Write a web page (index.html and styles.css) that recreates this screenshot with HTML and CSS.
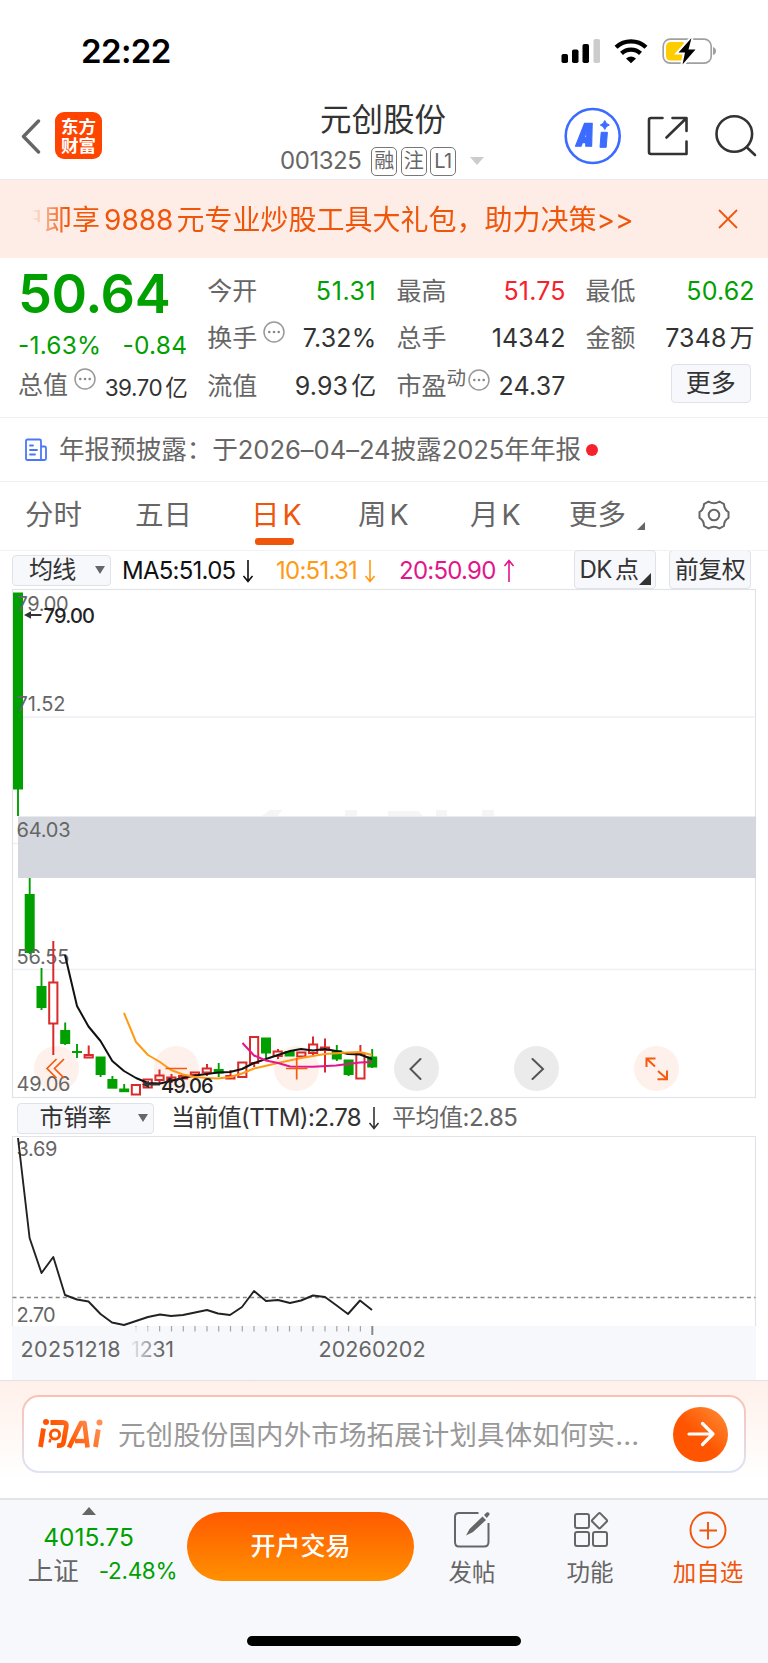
FILE: index.html
```html
<!DOCTYPE html>
<html lang="zh-CN">
<head>
<meta charset="utf-8">
<title>元创股份 001325</title>
<link rel="stylesheet" href="styles.css">
</head>
<body>
<div class="status">
  <span class="clock">22:22</span>
  <svg class="status-icons" width="160" height="32" viewBox="556 35 160 32">
    <g fill="#000"><rect x="561.5" y="54" width="6.5" height="9" rx="1.8"/><rect x="572" y="49.5" width="6.5" height="13.5" rx="1.8"/><rect x="582.5" y="44" width="6.5" height="19" rx="1.8"/></g>
    <rect x="593.500" y="39" width="6.500" height="24" rx="1.800" fill="#ccc"/>
    <g fill="none" stroke="#000" stroke-width="4.300"><path d="M616 47.300a22 22 0 0 1 30 0"/><path d="M621.500 53.300a14 14 0 0 1 19 0"/></g>
    <path d="M626 58.500q5-3.800 10 0l-5 4.800z" fill="#000"/>
    <rect x="663.200" y="39.200" width="48" height="24" rx="7" fill="none" stroke="#a0a0a0" stroke-width="1.700"/>
    <path d="M713 47q3 1 3 4t-3 4z" fill="#a0a0a0"/>
    <rect x="666" y="42" width="20" height="18.500" rx="4.500" fill="#ffcc00"/>
    <path d="M691.500 38L678.500 52.500h6.500L682.500 64.500 695.500 49.500h-7z" fill="#000" stroke="#fff" stroke-width="4" paint-order="stroke"/>
  </svg>
</div>

<header class="header">
  <svg class="back" width="22" height="36" viewBox="0 0 22 36"><path d="M18.500 3L3.500 18.500 18.500 34" fill="none" stroke="#666" stroke-width="3.400" stroke-linecap="round" stroke-linejoin="round"/></svg>
  <div class="logo"><span>东方</span><span>财富</span></div>
  <div class="title">
    <h1>元创股份</h1>
    <div class="code"><span class="num">001325</span><i>融</i><i>注</i><i>L1</i><b class="caret"></b></div>
  </div>
  <svg class="tools" width="204" height="60" viewBox="562 105 204 60">
    <circle cx="592.700" cy="136" r="27" fill="#fff" stroke="#3b6bff" stroke-width="2.600"/>
    <path fill-rule="evenodd" d="M575.500 146.200L584.600 123.300H592.200L591.600 146.200H585.800V142.600H582.400L581 146.200zM584 137.600H586.200V131.200z" fill="#3b6bff" stroke="#3b6bff" stroke-width="1.200" stroke-linejoin="round"/>
    <path d="M601.200 132.300h6.200l-1.200 15h-6.200zM604.800 120.500q1 3.500 4.500 4.500-3.500 1-4.500 4.500-1-3.500-4.500-4.500 3.500-1 4.500-4.500z" fill="#3b6bff" stroke="#3b6bff" stroke-width="1" stroke-linejoin="round"/>
    <g fill="none" stroke="#333" stroke-width="2.600" stroke-linecap="round" stroke-linejoin="round">
      <path d="M662.500 118H651q-2 0-2 2v32q0 2 2 2h35.500V141.500M672.500 118h14v13M686 118.500L666.500 137.500"/>
      <circle cx="734.300" cy="134" r="17.800"/><path d="M747 147.500l8 7.500"/>
    </g>
  </svg>
</header>

<div class="banner">
  <div class="marquee"><span>户</span>即享<em>9888</em>元专业炒股工具大礼包，助力决策&gt;&gt;</div>
  <svg width="22" height="22" viewBox="0 0 22 22"><path d="M2 2l18 18M20 2L2 20" stroke="#f0560b" stroke-width="1.800"/></svg>
</div>

<section class="quote">
  <div class="col main">
    <div class="price">50.64</div>
    <div class="pair green change"><span>-1.63%</span><span>-0.84</span></div>
    <div class="pair cap"><label>总值</label><svg class="dots" width="22" height="22" viewBox="0 0 22 22"><use href="#dots"/></svg><span class="end small">39.70<u>亿</u></span></div>
  </div>
  <div class="col">
    <div class="cell"><label>今开</label><span class="end green wide">51.31</span></div>
    <div class="cell"><label>换手</label><svg class="dots" width="22" height="22" viewBox="0 0 22 22"><use href="#dots"/></svg><span class="end">7.32%</span></div>
    <div class="cell"><label>流值</label><span class="end">9.93<u>亿</u></span></div>
  </div>
  <div class="col">
    <div class="cell"><label>最高</label><span class="end red">51.75</span></div>
    <div class="cell"><label>总手</label><span class="end">14342</span></div>
    <div class="cell"><label>市盈</label><sup>动</sup><svg class="dots near" width="22" height="22" viewBox="0 0 22 22"><g id="dots"><circle cx="11" cy="11" r="10" fill="none" stroke="#999" stroke-width="1.500"/><g fill="#888"><circle cx="6.300" cy="11" r="1.300"/><circle cx="11" cy="11" r="1.300"/><circle cx="15.700" cy="11" r="1.300"/></g></g></svg><span class="end">24.37</span></div>
  </div>
  <div class="col">
    <div class="cell"><label>最低</label><span class="end green">50.62</span></div>
    <div class="cell"><label>金额</label><span class="end">7348<u>万</u></span></div>
    <div class="cell"><span class="more">更多</span></div>
  </div>
</section>

<div class="news">
  <svg width="24" height="24" viewBox="0 0 24 24"><g fill="none" stroke="#4a78f5" stroke-width="1.800" stroke-linejoin="round" stroke-linecap="round"><path d="M2 3q0-1.500 1.500-1.500h12q1.500 0 1.500 1.500v19H3.500Q2 22 2 20.500zM17 8.500h3.500q1.500 0 1.500 1.500v10.500q0 1.500-1.500 1.500H17M6 7.500h3M6 12h7M6 16.500h5"/></g></svg>
  <p>年报预披露：于2026–04–24披露2025年年报</p><b></b>
</div>

<nav class="tabs">
  <span>分时</span><span>五日</span><span class="on">日<em>K</em></span><span>周<em>K</em></span><span>月<em>K</em></span><span>更多</span>
  <svg class="corner" width="8" height="8" viewBox="0 0 8 8"><path d="M8 0v8H0z" fill="#666"/></svg>
  <svg class="gear" width="34" height="32" viewBox="0 0 34 32"><g fill="none" stroke="#666" stroke-width="2"><circle cx="17" cy="16" r="5.300"/><path stroke-linejoin="round" d="M11.500 2.500Q17 6 22.500 2.500L27 5.200Q27 10.500 31.500 13.200V18.800Q27 21.500 27 26.800L22.500 29.500Q17 26 11.500 29.500L7 26.800Q7 21.500 2.500 18.800V13.200Q7 10.500 7 5.200z"/></g></svg>
</nav>

<div class="ma">
  <span class="select s1">均线<svg width="10" height="8" viewBox="0 0 10 8"><path d="M0 0h10L5 8z" fill="#666"/></svg></span>
  <span class="m5">MA5:51.05<svg class="arr" viewBox="0 0 12 24"><path d="M6 1v21M1.500 17L6 22.500 10.500 17"/></svg></span>
  <span class="m10">10:51.31<svg class="arr" viewBox="0 0 12 24"><path d="M6 1v21M1.500 17L6 22.500 10.500 17"/></svg></span>
  <span class="m20">20:50.90<svg class="arr" viewBox="0 0 12 24"><path d="M6 23V2M1.500 7L6 1.500 10.500 7"/></svg></span>
  <span class="tag dk">DK<u>点</u><svg width="12" height="12" viewBox="0 0 12 12"><path d="M12 0v12H0z" fill="#333"/></svg></span>
  <span class="tag fq">前复权</span>
</div>

<svg class="kline" width="768" height="511" viewBox="0 588 768 511">
  <g fill="none" stroke="#eef0f4" stroke-width="1.300"><path d="M12.500 717H755.500M12.500 843.500H755.500M12.500 969.500H755.500"/></g>
  <rect x="12.500" y="589.500" width="743" height="508" fill="none" stroke="#e1e3e8" stroke-width="1.200"/>
  <g fill="#f5f5f6"><path d="M270 810h12l-4 6h-16zM345 810h12v6h-12zM388 816v-5h30l5 5zM436 810h11v6h-11zM482 810h12v6h-12z"/></g>
  <rect x="18" y="816.500" width="738" height="61.500" fill="#d4d7dd"/>
  <g fill="#fef0ea"><circle cx="56.500" cy="1068.500" r="22.500"/><circle cx="176.300" cy="1068.500" r="22.500"/><circle cx="296.500" cy="1068.500" r="22.500"/><circle cx="656.500" cy="1068.500" r="22.500"/></g>
  <g fill="#ebebeb"><circle cx="416.500" cy="1068.500" r="22.500"/><circle cx="536.500" cy="1068.500" r="22.500"/></g>
  <g fill="#00a000">
    <rect x="13" y="592.500" width="10" height="197"/><rect x="24.700" y="894" width="10" height="59"/><rect x="36.500" y="986" width="10" height="22"/><rect x="60.200" y="1030" width="10" height="14"/><rect x="72" y="1051" width="10" height="2"/><rect x="95.600" y="1056.500" width="10" height="18.500"/><rect x="107.400" y="1079" width="10" height="9.700"/><rect x="119.200" y="1088.500" width="10" height="3.700"/><rect x="213.700" y="1069" width="10" height="4.500"/><rect x="261" y="1037.500" width="10" height="16"/><rect x="284.600" y="1051" width="10" height="5.500"/><rect x="331.800" y="1050" width="10" height="9.500"/><rect x="343.600" y="1059.500" width="10" height="15.500"/><rect x="367.200" y="1056.500" width="10" height="11"/>
  </g>
  <g class="axis">
    <text x="16.500" y="611" textLength="52">79.00</text>
    <text x="16.500" y="710.500" textLength="49">71.52</text>
    <text x="16.500" y="837" textLength="54">64.03</text>
    <text x="16.500" y="964" textLength="53">56.55</text>
    <text x="16.500" y="1090.500" textLength="54">49.06</text>
  </g>
  <path stroke="#00a000" stroke-width="1.900" d="M18 789V816M29.700 878V954M41.500 968V1010M65.200 1022.500V1045M77 1044V1058M100.600 1070V1077M112.400 1076V1080M124.200 1084V1089M218.700 1063V1077M266 1050V1058M336.800 1045V1061M348.600 1072V1076M372.200 1049V1068"/>
  <g fill="none" stroke="#d92b2b" stroke-width="2">
    <path d="M53.300 941V982M53.300 1024V1055M88.700 1045.500V1054M159.500 1069.500V1075M159.500 1080V1084M171.500 1074V1083M207 1064V1068M207 1072V1076M230.500 1070V1075M254.200 1063V1067M278 1049V1051M278 1056V1059M313 1036.500V1044M313 1053V1055.500M325 1038.500V1072.500M360.400 1045V1053"/>
    <rect x="49.200" y="982.500" width="8.200" height="41"/><rect x="84.600" y="1055" width="8.200" height="2.500"/><rect x="131.800" y="1085" width="8.200" height="9.500"/><rect x="143.600" y="1079.500" width="8.200" height="8"/><rect x="155.400" y="1075.500" width="8.200" height="4.500"/><rect x="167.200" y="1077.500" width="8.200" height="2.500"/><rect x="179" y="1076" width="8.200" height="2.500"/><rect x="190.800" y="1072.500" width="8.200" height="2.500"/><rect x="202.700" y="1068.500" width="8.200" height="4"/><rect x="226.300" y="1076" width="8.200" height="2.500"/><rect x="238.200" y="1062.500" width="8.200" height="14.500"/><rect x="250" y="1037" width="8.200" height="26"/><rect x="273.600" y="1051.500" width="8.200" height="4.500"/><rect x="297.200" y="1052.500" width="8.200" height="4"/><rect x="309" y="1044.500" width="8.200" height="8.500"/><rect x="320.900" y="1047.500" width="8.200" height="2.500"/><rect x="356.300" y="1053.500" width="8.200" height="25"/>
  </g>
  <g fill="none" stroke-width="2" stroke-linejoin="round">
    <path stroke="#111" d="M65 955L77 1006L88.500 1026.500L100.500 1041L112.300 1061L124 1071L136 1078L148 1083L160 1083.500L171 1081L183 1078L195 1075.500L207 1074L218 1072.500L230 1072L242 1069L254 1063L266 1059L278 1055L290 1051L301 1049L313 1050.500L325 1049L336 1051L348 1054L360 1054.500L372 1059"/>
    <path stroke="#ff9a14" d="M124 1013L136 1042L148 1055L160 1062L171 1070L183 1074.500L195 1077L207 1078L218 1078.500L230 1077L242 1073.500L254 1068.500L278 1063L301 1058L325 1054L348 1052.500L360 1052L372 1055"/>
    <path stroke="#e3158c" d="M242.500 1043L254 1055.500L266 1060.500L278 1063L290 1066.500L313 1066.800L336 1065.500L360 1062.500L372 1062"/>
  </g>
  <path d="M28 615H41.500M146 1084.500H160" stroke="#333" stroke-width="2"/><path d="M24 615l7-3.800v7.600zM142 1084.500l7-3.800v7.600z" fill="#333"/>
  <g class="peak"><text x="43.500" y="622.500" textLength="51.500">79.00</text><text x="161" y="1093" textLength="52.500">49.06</text></g>
  <g fill="none" stroke="#f65a0e" stroke-width="1.700">
    <path d="M56.500 1059L47 1068.500 56.500 1078M64 1059L54.500 1068.500 64 1078M165.500 1068.500H187M286 1068.500H307.500M296.700 1058V1079.500"/>
    <path stroke-width="2" d="M646.500 1067V1058.500H655.500M647 1059L655 1066.500M658 1071L666.500 1078.500M657.500 1079.200H667V1070.500"/>
  </g>
  <path fill="none" stroke="#555" stroke-width="2" stroke-linecap="round" d="M420.500 1059L410.500 1069 420.500 1079M532.500 1059L543 1069 532.500 1079"/>
</svg>

<div class="ps">
  <span class="select s2">市销率<svg width="10" height="8" viewBox="0 0 10 8"><path d="M0 0h10L5 8z" fill="#666"/></svg></span>
  <span class="cur">当前值(TTM):2.78<svg class="arr" viewBox="0 0 12 24"><path d="M6 1v21M1.500 17L6 22.500 10.500 17"/></svg></span>
  <span class="avg">平均值:2.85</span>
</div>

<svg class="psline" width="768" height="244" viewBox="0 1136 768 244">
  <defs><linearGradient id="fade" x1="0" x2="1"><stop offset="0" stop-color="#f7f8fb"/><stop offset="1" stop-color="#f7f8fb" stop-opacity="0"/></linearGradient></defs>
  <path d="M12.500 1326V1136.500H755.500V1326" fill="none" stroke="#e1e3e8" stroke-width="1.200"/>
  <rect x="12" y="1326" width="744" height="54" fill="#f7f8fb"/>
  <path d="M12.500 1297.500H755.500" stroke="#888" stroke-width="1.300" stroke-dasharray="4 3.200"/>
  <g class="axis"><text x="16.500" y="1156" textLength="41">3.69</text><text x="16.500" y="1321.500" textLength="39">2.70</text></g>
  <path fill="none" stroke="#222" stroke-width="1.900" stroke-linejoin="round" d="M18 1138L29.600 1238L41.500 1273L53.300 1257L65 1295L77 1299.500L88.500 1301.500L100.500 1314L112 1322.500L124 1325L136 1321L148 1317L160 1314.500L171 1316L183 1315L195 1312.500L207 1310L218 1313.500L230 1315L242 1307L254 1291L266 1301L278 1300L290 1303L301 1300.500L313 1295.500L325 1297L336 1305L348 1314L360 1300.500L372 1310"/>
  <path stroke="#a5a5a8" stroke-width="1.200" d="M136 1326v5.500M147.800 1326v5.500M159.600 1326v5.500M171.500 1326v5.500M183.300 1326v5.500M195 1326v5.500M207 1326v5.500M218.700 1326v5.500M230.500 1326v5.500M242.300 1326v5.500M254 1326v5.500M266 1326v5.500M277.700 1326v5.500M289.500 1326v5.500M301.300 1326v5.500M313 1326v5.500M325 1326v5.500M336.800 1326v5.500M348.600 1326v5.500M360.400 1326v5.500"/>
  <path d="M372.300 1326v9" stroke="#888" stroke-width="2"/>
  <g class="date"><text x="20.500" y="1356.500" textLength="100">20251218</text><text x="131" y="1356.500" textLength="43">1231</text><text x="318.500" y="1356.500" textLength="107">20260202</text></g>
  <rect x="128" y="1327" width="34" height="34" fill="url(#fade)"/>
</svg>

<section class="ask">
  <div class="askbox">
    <svg width="66" height="32" viewBox="38 1418 66 32">
      <defs><linearGradient id="brand" gradientUnits="userSpaceOnUse" x1="70" y1="1446" x2="102" y2="1420"><stop offset="0" stop-color="#ff5500"/><stop offset="1" stop-color="#ff9a60"/></linearGradient></defs>
      <g fill="none" stroke="url(#brand)" stroke-width="4.800" stroke-linejoin="round">
        <path d="M43.500 1428.500L40.500 1447M50.500 1422.500H62.500Q67 1422.500 66.300 1426.500L63.500 1442.500Q63 1446 57 1445.700"/>
        <path d="M69 1447.500L81 1423H84.500L87.500 1447.500M75 1441H87" stroke-width="4.600"/><path d="M98.300 1429.500L95.500 1447"/>
        <circle cx="55" cy="1434.500" r="4.600" stroke-width="3"/><path d="M50.500 1439l-1 3.500" stroke-width="2.500"/>
      </g>
      <circle cx="46" cy="1422" r="3" fill="#ff5500"/><circle cx="99.500" cy="1422.500" r="3" fill="#ff8f55"/>
    </svg>
    <p>元创股份国内外市场拓展计划具体如何实...</p>
    <span class="go"><svg width="30" height="30" viewBox="0 0 30 30"><path d="M3 15H27M16.500 4.500L27 15 16.500 25.500" fill="none" stroke="#fff" stroke-width="3.200" stroke-linecap="round" stroke-linejoin="round"/></svg></span>
  </div>
</section>

<footer class="foot">
  <div class="index">
    <svg width="14" height="8" viewBox="0 0 14 8"><path d="M0 8L7 0l7 8z" fill="#666"/></svg>
    <div class="pts">4015.75</div>
    <div class="sz"><span>上证</span><em>-2.48%</em></div>
  </div>
  <div class="trade">开户交易</div>
  <div class="act a1"><svg width="40" height="40" viewBox="453 1510 40 40"><path d="M479.500 1513H460q-4 0-4 4v25q0 4.500 4 4.500h25q4.500 0 4.500-4.500V1523" fill="none" stroke="#666" stroke-width="2"/><path d="M467 1535.500l3.500-6.500 13-12.500 3.500 3.500-13 12zM485 1515l2.500-2.500q1.500-.8 2.500.3 1 1.200 0 2.500L487.800 1518z" fill="#666"/></svg><span>发帖</span></div>
  <div class="act a2"><svg width="40" height="40" viewBox="570 1510 40 40"><g fill="none" stroke="#666" stroke-width="2"><rect x="575" y="1514" width="14" height="14" rx="2"/><rect x="575" y="1532" width="14" height="14" rx="2"/><rect x="593" y="1532" width="14" height="14" rx="2"/><rect x="593.700" y="1515" width="11.500" height="11.500" rx="1.500" transform="rotate(45 599.500 1520.800)"/></g></svg><span>功能</span></div>
  <div class="act a3"><svg width="40" height="40" viewBox="0 0 40 40"><g fill="none" stroke="#f0560b" stroke-width="1.900"><circle cx="20" cy="20" r="17.500"/><path d="M11.500 20.500h17.500M20 12v17.500"/></g></svg><span>加自选</span></div>
  <i class="home"></i>
</footer>
</body>
</html>
```
FILE: styles.css
```css
* { box-sizing: border-box; margin: 0; padding: 0; }
body { width: 768px; height: 1663px; background: #fff; color: #333; font-family: Inter, "Noto Sans CJK SC", sans-serif; overflow: hidden; }
svg { display: block; flex: none; }
i, em { font-style: normal; }
u { text-decoration: none; margin-left: 3px; }
span, label, p { white-space: nowrap; }
.green { color: #00a000; }
.red { color: #f5222d; }

.status { height: 104px; padding: 35px 52px 0 81px; display: flex; justify-content: space-between; }
.clock { font-size: 33px; font-weight: 600; line-height: 33px; color: #000; letter-spacing: -.600px; }

.header { height: 76px; border-bottom: 1px solid #e9e9ee; display: flex; }
.back { margin: 14px 0 0 20px; }
.logo { width: 47px; height: 47px; margin: 8px 0 0 13px; background: #ff4400; border-radius: 9px; color: #fff; font-size: 17.500px; font-weight: 700; line-height: 19px; display: flex; flex-direction: column; justify-content: center; align-items: center; }
.title { width: 224px; margin-left: 168px; }
.title h1 { font-size: 31.500px; line-height: 32px; font-weight: 400; text-align: center; padding-left: 2px; }
.code { display: flex; align-items: center; margin-top: 10px; padding-left: 10px; font-size: 24px; line-height: 30px; color: #666; }
.code .num { width: 91px; letter-spacing: -.450px; }
.code i { width: 26px; height: 29px; margin-right: 3.500px; border: 1.500px solid #777; border-radius: 5px; font-size: 20px; line-height: 26px; text-align: center; letter-spacing: -.500px; }
.caret { margin-left: 10px; border: 7px solid transparent; border-top: 8px solid #ccc; border-bottom: 0; }
.tools { margin: 1px 0 0 68px; }

.banner { height: 78px; background: #fdede6; display: flex; align-items: center; justify-content: space-between; padding: 0 29px 0 16px; color: #f0560b; }
.marquee { font-size: 28px; line-height: 40px; padding-top: 1px; white-space: nowrap; -webkit-mask: linear-gradient(90deg, transparent 16px, #000 50px); mask: linear-gradient(90deg, transparent 16px, #000 50px); }
.marquee em { margin: 0 3px 0 4px; letter-spacing: 0; }

.quote { height: 160px; padding: 9px 13px 0 18px; display: flex; gap: 20px; border-bottom: 1px solid #eee; font-size: 25px; }
.col { width: 169.200px; }
.cell { height: 47.500px; display: flex; align-items: center; line-height: 30px; letter-spacing: .150px; }
.cell label, .cap label { color: #666; letter-spacing: 0; }
.end { margin-left: auto; }
.wide { letter-spacing: .600px; }
.dots { margin: -12px 0 0 6px; }
.dots.near { margin-left: 2px; }
.cell sup { font-size: 19.500px; line-height: 20px; margin-top: -16px; color: #666; }
.price { font-size: 54px; font-weight: 600; line-height: 54px; color: #00a000; letter-spacing: -.400px; }
.pair { display: flex; align-items: center; line-height: 30px; }
.change { margin-top: 9px; justify-content: space-between; font-size: 24.500px; letter-spacing: .200px; }
.cap { margin-top: 9px; height: 32px; }
.small { font-size: 22.500px; letter-spacing: -.500px; padding-top: 5px; }
.more { margin-left: auto; margin-right: 4px; width: 80px; height: 39px; margin-top: -4px; background: #f7f8fb; border: 1.500px solid #e0e2e8; border-radius: 4px; text-align: center; line-height: 37px; letter-spacing: 0; }

.news { height: 64px; border-bottom: 1px solid #eee; padding-left: 24px; display: flex; align-items: center; font-size: 25.600px; color: #666; }
.news p { margin-left: 11px; letter-spacing: -.050px; line-height: 36px; }
.news b { width: 12px; height: 12px; border-radius: 6px; background: #f5222d; margin-left: 5px; }

.tabs { height: 69px; border-bottom: 1px solid #f2f2f4; position: relative; display: flex; padding-left: 25px; font-size: 28.500px; line-height: 66px; color: #666; }
.tabs span { width: 110px; }
.tabs span:nth-child(2) { width: 116px; }
.tabs span:nth-child(3) { width: 107px; }
.tabs span:nth-child(4) { width: 112px; }
.tabs span:nth-child(5) { width: 99px; }
.tabs span:nth-child(6) { width: 68px; }
.tabs em { margin-left: 3px; }
.tabs .on { color: #f0560b; position: relative; }
.on::after { content: ""; position: absolute; left: 4px; top: 56px; width: 39px; height: 6.500px; border-radius: 3px; background: #f0560b; }
.corner { margin-top: 40px; }
.gear { margin: 17px 0 0 52px; }

.ma { height: 37px; display: flex; padding-left: 12px; font-size: 24px; line-height: 36px; }
.select { display: flex; align-items: center; justify-content: space-between; background: #f7f8fb; border: 1.500px solid #e0e2e8; border-radius: 4px; color: #333; }
.s1 { width: 98.500px; height: 31px; margin-top: 3.500px; padding: 0 5px 0 16px; }
.arr { width: 12px; height: 24px; fill: none; stroke: currentColor; stroke-width: 1.600px; margin-left: 7px; }
.ma > span { display: flex; align-items: center; letter-spacing: -.750px; flex: none; }
.ma > .m5, .ma > .m10, .ma > .m20 { padding-top: 2px; }
.ma > .m5 { width: 154px; margin-left: 11.500px; color: #111; }
.m10 { width: 123px; color: #ff9a14; }
.m20 { width: 175px; color: #e3158c; }
.ma > .tag { height: 39px; margin-top: -1px; border: 1.500px solid #e0e2e8; border-radius: 4px; background: #f7f8fb; justify-content: center; letter-spacing: -.500px; padding-top: 1px; }
.ma > .dk { width: 82px; position: relative; padding-right: 12px; }
.dk svg { position: absolute; right: 4px; bottom: 3px; }
.fq { width: 82px; margin-left: 13px; }

.axis { font-size: 20px; fill: #666; }
.peak { font-size: 20px; font-weight: 500; fill: #222; }
.date { font-size: 21.500px; fill: #666; }

.ps { height: 37px; display: flex; align-items: center; padding-left: 16.500px; font-size: 24px; line-height: 32px; padding-top: 1px; }
.s2 { width: 137.500px; height: 31px; padding: 0 5px 0 22px; }
.cur { display: flex; align-items: center; width: 221px; margin-left: 17px; letter-spacing: -.650px; }
.avg { color: #666; letter-spacing: -.500px; }

.ask { height: 118px; border-top: 1px solid #e2e3e8; background: linear-gradient(#fff0ea, #fff 85%); padding: 14px 22px 0; }
.askbox { height: 78px; border: 2px solid transparent; border-radius: 17px; background: linear-gradient(#fff, #fff) padding-box, linear-gradient(#fdbfb5, #dde4f5) border-box; display: flex; align-items: center; padding: 0 16px 0 14px; }
.askbox p { margin-left: 14px; padding-top: 2px; font-size: 27.500px; letter-spacing: .120px; color: #999; line-height: 40px; }
.go { width: 55px; height: 55px; border-radius: 50%; margin-left: auto; background: linear-gradient(45deg, #ff5500 45%, #ff8f38); display: flex; align-items: center; justify-content: center; }

.foot { position: relative; height: 165px; background: #f7f8fb; border-top: 2px solid #e4e5e9; display: flex; }
.index { width: 187px; display: flex; flex-direction: column; align-items: center; padding: 7px 10px 0 0; }
.pts { color: #00a000; font-size: 24.500px; line-height: 30px; margin-top: 7px; letter-spacing: 0; }
.sz { display: flex; align-items: center; gap: 20px; font-size: 25.500px; line-height: 30px; margin: 4px -28px 0 0; color: #666; }
.sz em { color: #00a000; font-size: 22.500px; letter-spacing: -.300px; }
.trade { width: 227px; height: 69px; margin-top: 12px; border-radius: 35px; background: linear-gradient(#ff5a00, #ff9000); color: #fff; font-size: 25px; font-weight: 500; line-height: 68px; text-align: center; }
.act { display: flex; flex-direction: column; align-items: center; width: 118px; padding-top: 10px; font-size: 23.500px; color: #666; line-height: 32px; }
.act span { margin-top: 7px; }
.a1 { margin-left: -1px; }
.a3 { color: #f0560b; }
.home { position: absolute; left: 247px; top: 136px; width: 274px; height: 10px; border-radius: 5px; background: #000; }
```
